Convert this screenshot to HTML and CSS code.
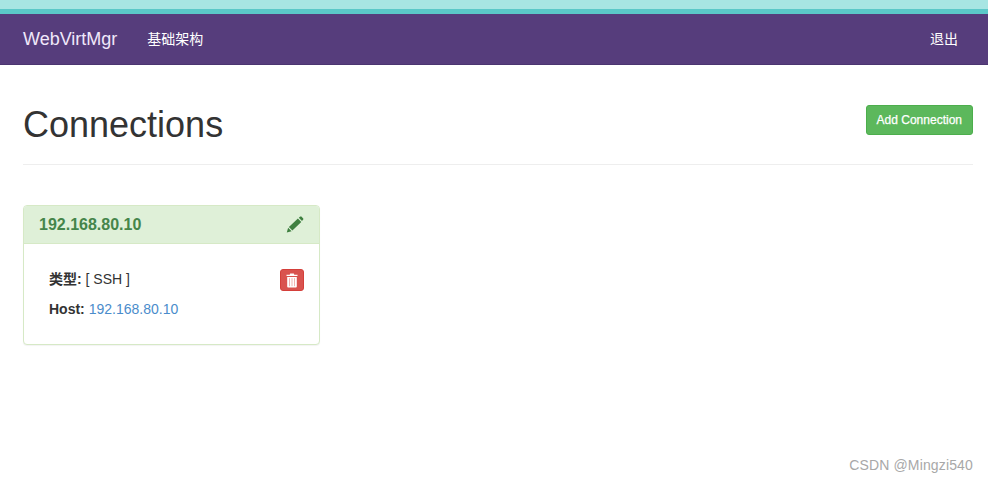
FILE: index.html
```html
<!DOCTYPE html>
<html lang="zh">
<head>
<meta charset="utf-8">
<title>WebVirtMgr</title>
<link rel="stylesheet" href="styles.css">
</head>
<body>
<div class="top-band"></div>
<nav class="navbar">
  <div class="nav-left">
    <a class="brand">WebVirtMgr</a>
    <a class="nav-link">基础架构</a>
  </div>
  <a class="nav-link">退出</a>
</nav>
<main class="container">
  <header class="page-header">
    <h1 class="title">Connections</h1>
    <a class="btn-add">Add Connection</a>
  </header>
  <section class="panel">
    <div class="panel-heading">
      <h3 class="panel-title">192.168.80.10</h3>
      <svg class="icon-pencil" viewBox="0 0 18 17" width="18" height="17"><path d="M0.8 16.6 L2.1 11.8 L5.6 15.3 Z M2.9 11 L11.9 2.6 L15.3 6 L6.4 14.5 Z M12.8 1.8 L14.2 0.6 Q14.8 0.2 15.4 0.6 L17.2 2.4 Q17.7 3 17.2 3.6 L16 4.9 Z" fill="#3f8040"/></svg>
    </div>
    <div class="panel-body">
      <div class="info">
        <p class="row"><strong>类型:</strong> [ SSH ]</p>
        <p class="row"><strong>Host:</strong> <a class="host">192.168.80.10</a></p>
      </div>
      <a class="btn-del">
        <svg viewBox="0 0 12 15" width="12" height="15"><path d="M4.2 0.5 H7.8 L8.3 1.8 H11.5 V3.1 H0.5 V1.8 H3.7 Z M1.2 4 H10.8 V13.6 Q10.8 14.5 9.9 14.5 H2.1 Q1.2 14.5 1.2 13.6 Z" fill="#fff"/><path d="M3.5 5.2 V13.2 M6 5.2 V13.2 M8.5 5.2 V13.2" stroke="#f0b4b1" stroke-width="1" fill="none"/></svg>
      </a>
    </div>
  </section>
</main>
<div class="watermark">CSDN @Mingzi540</div>
</body>
</html>
```
FILE: styles.css
```css
* { box-sizing: border-box; }
html, body { height: 100%; }
body {
  margin: 0;
  position: relative;
  overflow: hidden;
  background: #fff;
  color: #333;
  font: 14px/20px "Liberation Sans", "Noto Sans CJK SC", sans-serif;
}
.top-band {
  height: 14px;
  background: #a7e5e3;
  border-bottom: 5px solid #5bc8c8;
}
.navbar {
  height: 51px;
  padding: 0 30px 0 23px;
  background: #563d7c;
  border-bottom: 1px solid #4b3570;
  display: flex;
  align-items: center;
  justify-content: space-between;
  color: #fff;
}
.nav-left { display: flex; align-items: center; gap: 30px; }
.brand { font-size: 18px; color: #f0e8fa; }
.nav-link { font-size: 14px; color: #fff; }
.container { padding: 0 15px 0 23px; }
.page-header {
  height: 100px;
  padding-top: 40px;
  border-bottom: 1px solid #eee;
  display: flex;
  align-items: flex-start;
  justify-content: space-between;
  margin-bottom: 40px;
}
.title {
  margin: 0;
  font-size: 36px;
  line-height: 40px;
  font-weight: 400;
  color: #333;
}
.btn-add {
  height: 30px;
  padding: 4px 10px;
  font-size: 12px;
  line-height: 20px;
  color: #fff;
  -webkit-text-stroke: .25px #fff;
  background: #5cb85c;
  border: 1px solid #4cae4c;
  border-radius: 3px;
}
.panel {
  width: 297px;
  height: 140px;
  background: #fff;
  border: 1px solid #d6e9c6;
  border-radius: 4px;
  box-shadow: 0 1px 1px rgba(0,0,0,.05);
}
.panel-heading {
  height: 38px;
  padding: 0 15px;
  background: #dff0d8;
  border-bottom: 1px solid #d6e9c6;
  border-radius: 3px 3px 0 0;
  display: flex;
  align-items: center;
  justify-content: space-between;
}
.panel-title {
  margin: 0;
  font-size: 16px;
  font-weight: 700;
  color: #45854a;
}
.panel-body {
  padding: 25px 15px 0 25px;
  display: flex;
  justify-content: space-between;
  align-items: flex-start;
}
.row { margin: 0 0 10px; }
.row strong { font-weight: 700; }
.host { color: #4a8ccb; }
.btn-del {
  width: 24px;
  height: 22px;
  background: #d9534f;
  border: 1px solid #d43f3a;
  border-radius: 3px;
  display: flex;
  align-items: center;
  justify-content: center;
}
.watermark {
  position: absolute;
  right: 15px;
  top: 455px;
  font-size: 14px;
  color: #a8a8a8;
  letter-spacing: .15px;
  font-family: "Liberation Sans", sans-serif;
}
```
